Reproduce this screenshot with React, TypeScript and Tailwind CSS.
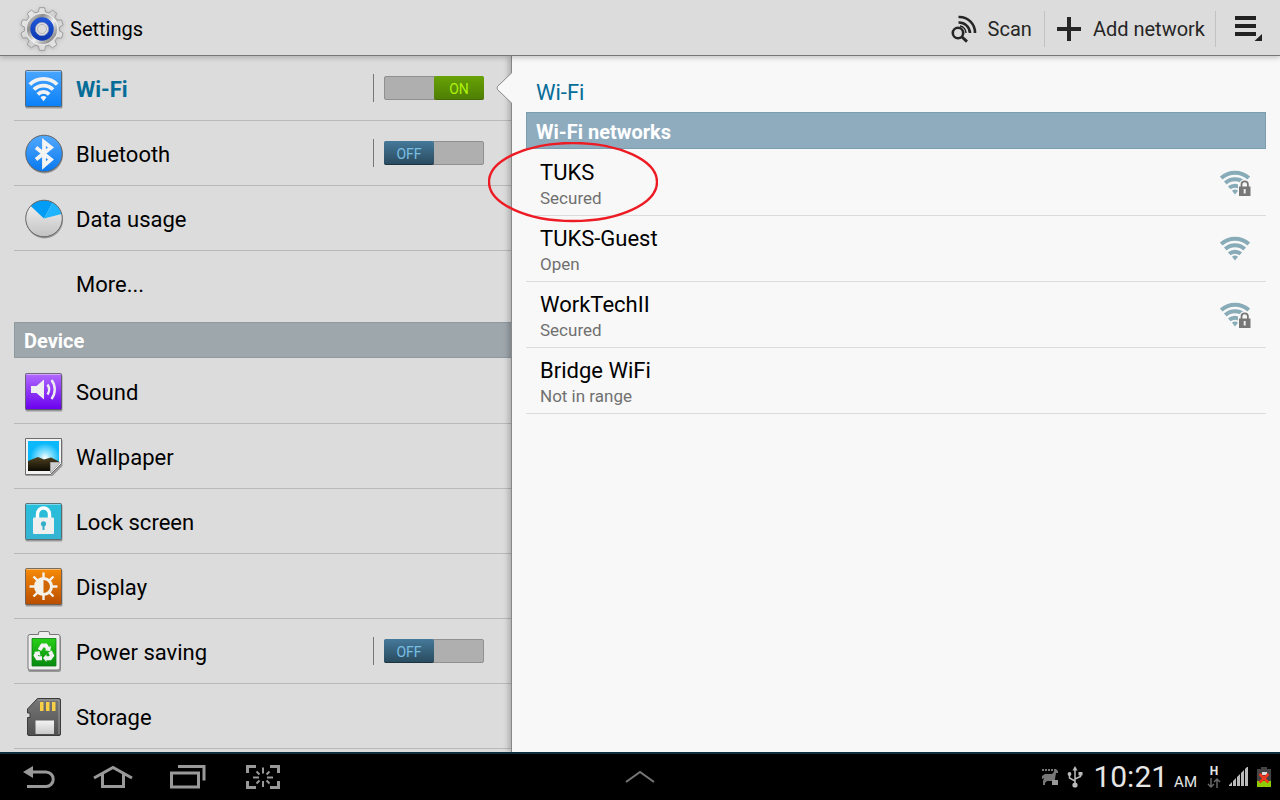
import { useState } from "react";
import type { ReactNode } from "react";

const gearPath = (() => {
  const points: string[] = [];
  for (let i = 0; i < 10; i++) {
    const steps = [
      [-12, 17.5],
      [-7, 21.5],
      [7, 21.5],
      [12, 17.5],
    ];
    for (const [offset, radius] of steps) {
      const angle = ((i * 36 + offset - 90) * Math.PI) / 180;
      points.push(
        `${(22 + radius * Math.cos(angle)).toFixed(2)},${(22 + radius * Math.sin(angle)).toFixed(2)}`
      );
    }
  }
  return `M${points.join("L")}Z`;
})();

function GearIcon() {
  return (
    <svg viewBox="0 0 44 44" className="size-11 drop-shadow-sm">
      <defs>
        <linearGradient id="gear" x1="0" y1="0" x2="1" y2="1">
          <stop offset="0" stopColor="#f4f4f4" />
          <stop offset="0.5" stopColor="#cfcfcf" />
          <stop offset="1" stopColor="#eee" />
        </linearGradient>
        <linearGradient id="gear-disc" x1="0" y1="0" x2="1" y2="1">
          <stop offset="0" stopColor="#e8e8e8" />
          <stop offset="0.3" stopColor="#8d8d8d" />
          <stop offset="0.55" stopColor="#f0f0f0" />
          <stop offset="0.8" stopColor="#959595" />
          <stop offset="1" stopColor="#dedede" />
        </linearGradient>
        <linearGradient id="gear-ring" x1="0" y1="0" x2="0" y2="1">
          <stop offset="0" stopColor="#1f55d6" />
          <stop offset="1" stopColor="#0d3ab4" />
        </linearGradient>
      </defs>
      <path d={gearPath} fill="url(#gear)" stroke="#8f8f8f" strokeWidth="0.8" strokeLinejoin="round" />
      <circle cx="22" cy="22" r="15.8" fill="url(#gear-disc)" stroke="#fafafa" strokeWidth="0.8" />
      <circle cx="22" cy="22" r="9.2" fill="#dcdcdc" stroke="url(#gear-ring)" strokeWidth="5" />
      <circle cx="22" cy="22" r="6.6" fill="#e4e4e6" stroke="#7f8cb5" strokeWidth="0.8" />
      <circle cx="22" cy="22" r="4.6" fill="#dcdcdc" stroke="#aaa" strokeWidth="0.8" />
    </svg>
  );
}

function ScanIcon() {
  return (
    <svg viewBox="0 0 28 28" className="size-7" fill="none" stroke="#262626">
      <circle cx="8" cy="18" r="5.2" strokeWidth="2.6" />
      <path d="M12 22l5 4.6" strokeWidth="3" />
      <path d="M8.5 7.5a11 11 0 0 1 11.5 10.5M8.5 2a15.5 15.5 0 0 1 16.5 16" strokeWidth="2.6" />
      <path d="M10 11a7 7 0 0 1 6 7" strokeWidth="1.5" />
    </svg>
  );
}

function Tile({ id, from, to, children }: { id: string; from: string; to: string; children: ReactNode }) {
  return (
    <svg viewBox="0 0 40 40" className="size-10 shrink-0">
      <defs>
        <linearGradient id={id} x1="0" y1="0" x2="0" y2="1">
          <stop offset="0" stopColor={from} />
          <stop offset="1" stopColor={to} />
        </linearGradient>
      </defs>
      <rect x="1.5" y="2.5" width="37" height="37" rx="1.5" fill="#000" opacity="0.3" />
      <rect x="1.5" y="1.5" width="36" height="36" rx="1" fill={`url(#${id})`} stroke="#555" strokeOpacity="0.75" />
      <path d="M2.5 2.5h34" stroke="#fff" strokeOpacity="0.4" />
      {children}
    </svg>
  );
}

function WifiTile() {
  return (
    <Tile id="wifi-tile" from="#4aa6ff" to="#0a80f8">
      <g fill="none" stroke="#f2f2f2" strokeWidth="3.8">
        <path d="M5.8 15.5a19.5 19.5 0 0 1 27.4 0" />
        <path d="M9.9 20.5a13.6 13.6 0 0 1 19.2 0" />
        <path d="M13.8 25.3a8 8 0 0 1 11.4 0" />
      </g>
      <path d="M16.5 28.3a4.2 4.2 0 0 1 6 0l-3 4z" fill="#f2f2f2" />
    </Tile>
  );
}

function BluetoothIcon() {
  return (
    <svg viewBox="0 0 40 40" className="size-10 shrink-0">
      <defs>
        <linearGradient id="bt" x1="0" y1="0" x2="0" y2="1">
          <stop offset="0" stopColor="#52a9ff" />
          <stop offset="1" stopColor="#0878ee" />
        </linearGradient>
      </defs>
      <circle cx="20.5" cy="21" r="18.5" fill="#000" opacity="0.3" />
      <circle cx="20" cy="19.5" r="18.3" fill="url(#bt)" stroke="#666" />
      <path d="M12 13.5l15 12-7 6V8l7 5.5-15 12" fill="none" stroke="#f4f4f4" strokeWidth="3.8" />
    </svg>
  );
}

function DataUsageIcon() {
  return (
    <svg viewBox="0 0 40 40" className="size-10 shrink-0">
      <defs>
        <linearGradient id="data" x1="0" y1="0" x2="0" y2="1">
          <stop offset="0" stopColor="#f4f4f4" />
          <stop offset="1" stopColor="#c2c2c2" />
        </linearGradient>
      </defs>
      <circle cx="20.5" cy="21" r="18.5" fill="#000" opacity="0.3" />
      <circle cx="20" cy="19.5" r="18.3" fill="url(#data)" />
      <path d="M20 19.5L6.7 7a18.3 18.3 0 0 1 22-3.6z" fill="#009cf5" />
      <path d="M20 19.5l8.7-16.1a18.3 18.3 0 0 1 9 11.5z" fill="#1fb4ff" />
      <circle cx="20" cy="19.5" r="18.3" fill="none" stroke="#666" />
    </svg>
  );
}

function SoundTile() {
  return (
    <Tile id="sound-tile" from="#b26bff" to="#6a00ee">
      <path d="M7 14h5.5l7.5-6.5v20l-7.5-6.5H7z" fill="#eee" />
      <g fill="none" stroke="#eee" strokeWidth="2.4">
        <path d="M23.5 12.5a9 9 0 0 1 0 10" />
        <path d="M27.5 8a15.5 15.5 0 0 1 0 19" />
      </g>
    </Tile>
  );
}

function WallpaperIcon() {
  return (
    <svg viewBox="0 0 40 40" className="size-10 shrink-0">
      <defs>
        <radialGradient id="sun" cx="0.55" cy="0.55" r="0.6">
          <stop offset="0" stopColor="#fff" />
          <stop offset="0.25" stopColor="#9fe8ff" />
          <stop offset="0.8" stopColor="#0ab8fb" />
        </radialGradient>
        <linearGradient id="hill" x1="0" y1="0" x2="0" y2="1">
          <stop offset="0" stopColor="#4f4220" />
          <stop offset="1" stopColor="#0c0a03" />
        </linearGradient>
      </defs>
      <path d="M1.5 3h37v26l-10 10h-27z" fill="#000" opacity="0.3" />
      <path d="M1.5 1.5h36v25l-11 11h-25z" fill="#f2f2f2" stroke="#6d6d6d" strokeLinejoin="round" />
      <path d="M4 4h31v20.5h-8.5V34H4z" fill="url(#sun)" />
      <path d="M4 24l10-4 6 2.5 7-2 8 4v0.5h-8.5V34H4z" fill="url(#hill)" />
      <path d="M26.5 36V25.5H36z" fill="#cfcfcf" stroke="#9c9c9c" strokeWidth="0.8" />
    </svg>
  );
}

function LockTile() {
  return (
    <Tile id="lock-tile" from="#27bfdc" to="#36b3d2">
      <path d="M13.5 17v-5a6 6 0 0 1 12 0v5" fill="none" stroke="#fff" strokeWidth="3.4" />
      <rect x="9" y="15.5" width="21" height="16.5" rx="1" fill="#efefef" />
      <circle cx="19.5" cy="21.8" r="2.6" fill="#35aeca" />
      <path d="M18.5 22h2v6h-2z" fill="#35aeca" />
    </Tile>
  );
}

function DisplayTile() {
  return (
    <Tile id="display-tile" from="#f78b06" to="#b94d00">
      <path
        d="M19.5 5.5v6M19.5 27v6M5.5 19.5h6M27 19.5h6.5M9.5 9.5l4.7 4.7M24.8 24.8l4.7 4.7M29.5 9.5l-4.7 4.7M14.2 24.8L9.5 29.5"
        stroke="#f4f0ea"
        strokeWidth="2.4"
      />
      <circle cx="19.5" cy="19.5" r="8" fill="#d06504" stroke="#f4f0ea" strokeWidth="3" />
      <path d="M19.5 12a7.5 7.5 0 0 0 0 15z" fill="#f4f0ea" />
    </Tile>
  );
}

function PowerIcon() {
  return (
    <svg viewBox="0 0 40 42" className="h-[42px] w-10 shrink-0">
      <defs>
        <linearGradient id="power" x1="0" y1="0" x2="0" y2="1">
          <stop offset="0" stopColor="#27cf18" />
          <stop offset="1" stopColor="#088a10" />
        </linearGradient>
      </defs>
      <rect x="4" y="5" width="33" height="36" rx="2" fill="#000" opacity="0.3" />
      <path
        d="M14.5 3.5V2a1.5 1.5 0 0 1 1.5-1.5h8A1.5 1.5 0 0 1 25.5 2v1.5H34a2 2 0 0 1 2 2V37a2 2 0 0 1-2 2H6a2 2 0 0 1-2-2V5.500a2 2 0 0 1 2-2z"
        fill="#efefef"
        stroke="#777"
      />
      <path d="M8 7.5h24V35H8z" fill="url(#power)" stroke="#0b7d10" strokeWidth="0.8" />
      <g fill="none" stroke="#f4f4f4" strokeWidth="4">
        <path d="M15.5 19l2.8-4.5h3.5l2 3" />
        <path d="M26 20.5l2 4-2 2.8h-4.5" />
        <path d="M18 27.3h-4.5l-1.8-2.8 1.8-3.3" />
      </g>
      <g fill="#f4f4f4">
        <path d="M20.8 19.3l5.5 1 .7-5.5z" />
        <path d="M22.5 23.3v7.6l-3.5-3.8z" />
        <path d="M10 21.5l5.5-1.6 1 5z" />
      </g>
    </svg>
  );
}

function StorageIcon() {
  return (
    <svg viewBox="0 0 40 40" className="size-10 shrink-0">
      <defs>
        <linearGradient id="card" x1="0" y1="0" x2="0" y2="1">
          <stop offset="0" stopColor="#777" />
          <stop offset="1" stopColor="#505050" />
        </linearGradient>
        <linearGradient id="label" x1="0" y1="0" x2="0" y2="1">
          <stop offset="0" stopColor="#f4f4f4" />
          <stop offset="1" stopColor="#cacaca" />
        </linearGradient>
      </defs>
      <path
        d="M13.5 1.5H35a1.500 1.500 0 0 1 1.5 1.5v34a1.500 1.500 0 0 1-1.5 1.5H5A1.500 1.500 0 0 1 3.5 37V20.500H6v-4.500H3.500v-4z"
        fill="url(#card)"
        stroke="#3c3c3c"
      />
      <path d="M14 3h21v34" fill="none" stroke="#aaa" strokeWidth="0.8" />
      <path d="M16 5h3.500v9H16zM22 5h3.500v9H22zM28 5h3.500v9H28z" fill="#f8cf45" />
      <path d="M11.500 23.500h18.500V37H11.500z" fill="url(#label)" />
    </svg>
  );
}

function SignalIcon({ locked }: { locked: boolean }) {
  return (
    <svg viewBox="0 0 32 28" className="h-7 w-8">
      <g fill="none" stroke="#88abb8" strokeWidth="4">
        <path d="M1.200 9a20.500 20.500 0 0 1 27.600 0" />
        <path d="M5.300 14a14.500 14.500 0 0 1 19.400 0" />
        <path d="M9.200 18.800a9 9 0 0 1 11.600 0" />
      </g>
      <path d="M12 21.800a4.600 4.600 0 0 1 6 0L15 25.500z" fill="#88abb8" />
      {locked && (
        <>
          <path d="M18 15h13v13H18z" fill="#f8f8f8" />
          <path d="M21.500 18v-2.500a3.200 3.200 0 0 1 6.400 0V18" fill="none" stroke="#f8f8f8" strokeWidth="4.500" />
          <path d="M21.500 18v-2.500a3.200 3.200 0 0 1 6.400 0V18" fill="none" stroke="#777" strokeWidth="1.800" />
          <path d="M19 17.500h11.500V27H19z" fill="#777" />
          <path d="M23.700 20h2v4.500h-2z" fill="#eee" />
        </>
      )}
    </svg>
  );
}

function Toggle({ label, on, onChange }: { label: string; on: boolean; onChange: () => void }) {
  return (
    <div className="flex h-7 items-center border-l border-[#777] pl-2.5">
      <label className="flex h-6 w-[100px] cursor-pointer rounded-xs border border-[#909090] bg-[#afafaf]">
        <input type="checkbox" className="sr-only" aria-label={label} checked={on} onChange={onChange} />
        {on ? (
          <span className="-my-px -mr-px ml-auto flex w-[50px] items-center justify-center rounded-xs border-b border-[#466b04] bg-linear-to-b from-[#68a206] to-[#4f7f04] pt-0.5 text-sm text-[#aef20c]">
            ON
          </span>
        ) : (
          <span className="-my-px -ml-px flex w-[50px] items-center justify-center rounded-xs border-b border-[#1c3442] bg-linear-to-b from-[#45799a] to-[#2a4c60] pt-0.5 text-sm text-[#79bfe4]">
            OFF
          </span>
        )}
      </label>
    </div>
  );
}

interface RowProps {
  icon?: ReactNode;
  label: string;
  active?: boolean;
  children?: ReactNode;
}

function SettingRow({ icon, label, active, children }: RowProps) {
  return (
    <li className="flex h-[65px] shrink-0 items-center border-b border-[#b9b9b9] pr-7">
      <button
        className={`flex h-full flex-1 items-center gap-3 pt-0.5 pl-2.5 text-left text-[22px] ${active ? "font-bold text-[#066d98]" : "text-black"}`}
      >
        <span className="flex w-10 justify-center">{icon}</span>
        {label}
      </button>
      {children}
    </li>
  );
}

const networks = [
  { name: "TUKS", status: "Secured", signal: true, marked: true },
  { name: "TUKS-Guest", status: "Open", signal: true },
  { name: "WorkTechII", status: "Secured", signal: true },
  { name: "Bridge WiFi", status: "Not in range", signal: false },
];

function TopBar() {
  return (
    <header className="relative z-20 flex h-14 shrink-0 items-center border-b border-[#777] bg-[#dcdcdc] pt-0.5 pl-5 text-xl text-black shadow-[0_2px_5px_rgba(0,0,0,0.2)]">
      <GearIcon />
      <h1 className="ml-1.5">Settings</h1>
      <div className="ml-auto flex h-9 items-center text-[#262626]">
        <button className="flex h-full items-center gap-2.5 border-r border-[#c2c2c2] pr-3">
          <ScanIcon />
          Scan
        </button>
        <button className="flex h-full items-center gap-3 border-r border-[#c2c2c2] pr-2.5 pl-3">
          <svg viewBox="0 0 24 24" className="size-6">
            <path d="M10 0h4v10h10v4H14v10h-4V14H0v-4h10z" fill="#262626" />
          </svg>
          Add network
        </button>
        <button aria-label="Menu" className="px-4.5">
          <svg viewBox="0 0 28 28" className="size-7">
            <path d="M1 1h21v4H1zM1 9h21v4H1zM1 17h21v4H1zM28 19v7h-7.500z" fill="#222" />
          </svg>
        </button>
      </div>
    </header>
  );
}

function Sidebar() {
  const [wifi, setWifi] = useState(true);
  const [bluetooth, setBluetooth] = useState(false);
  const [power, setPower] = useState(false);

  return (
    <nav className="w-2/5 shrink-0 overflow-hidden bg-[#dcdcdc] pl-3.5">
      <ul>
        <SettingRow icon={<WifiTile />} label="Wi-Fi" active>
          <Toggle label="Wi-Fi" on={wifi} onChange={() => setWifi(!wifi)} />
        </SettingRow>
        <SettingRow icon={<BluetoothIcon />} label="Bluetooth">
          <Toggle label="Bluetooth" on={bluetooth} onChange={() => setBluetooth(!bluetooth)} />
        </SettingRow>
        <SettingRow icon={<DataUsageIcon />} label="Data usage" />
        <li className="mb-1.5 flex h-[65px]">
          <button className="flex-1 pt-0.5 pl-[62px] text-left text-[22px]">More...</button>
        </li>
      </ul>
      <h2 className="flex h-9 items-center border border-[#8f9aa1] bg-[#9ea7ac] pt-0.5 pl-[9px] text-xl font-bold text-white">
        Device
      </h2>
      <ul className="pt-px">
        <SettingRow icon={<SoundTile />} label="Sound" />
        <SettingRow icon={<WallpaperIcon />} label="Wallpaper" />
        <SettingRow icon={<LockTile />} label="Lock screen" />
        <SettingRow icon={<DisplayTile />} label="Display" />
        <SettingRow icon={<PowerIcon />} label="Power saving">
          <Toggle label="Power saving" on={power} onChange={() => setPower(!power)} />
        </SettingRow>
        <SettingRow icon={<StorageIcon />} label="Storage" />
      </ul>
    </nav>
  );
}

function WifiPanel() {
  return (
    <main className="relative z-10 -ml-px flex-1 border-l border-[#888] bg-[#f8f8f8] px-3.5 shadow-[-2px_0_6px_rgba(0,0,0,0.25)]">
      {/* pointer towards the selected row */}
      <svg viewBox="0 0 17 32" className="absolute top-4 -left-4 h-8 w-[17px]">
        <path d="M17 0.500H16L1.500 14.500Q0.500 16 1.500 17.500L16 31.500H17z" fill="#f8f8f8" />
        <path d="M16 0.500L1.500 14.500Q0.500 16 1.500 17.500L16 31.500" fill="none" stroke="#888" />
      </svg>
      <h2 className="flex h-14 items-end pb-[3px] pl-2.5 text-[22px] text-[#066d98]">Wi-Fi</h2>
      <h3 className="flex h-[37px] items-center border border-[#7c9fb0] bg-[#8facbf] pt-0.5 pl-[9px] text-xl font-bold text-white">
        Wi-Fi networks
      </h3>
      <ul className="pt-px">
        {networks.map((network) => (
          <li key={network.name} className="relative border-b border-[#dcdcdc]">
            <button className="flex h-[65px] w-full items-center justify-between px-3.5 text-left">
              <span className="pt-1">
                <span className="block text-[22px] leading-[26px] text-black">{network.name}</span>
                <span className="block text-[17px] leading-6 text-[#707070]">{network.status}</span>
              </span>
              {network.signal && <SignalIcon locked={network.status === "Secured"} />}
            </button>
            {network.marked && (
              <svg
                viewBox="0 0 170 82"
                className="pointer-events-none absolute -top-2 -left-[38px] h-[82px] w-[170px]"
              >
                <ellipse cx="85" cy="40" rx="84" ry="39" fill="none" stroke="#ed1c24" strokeWidth="2.400" />
              </svg>
            )}
          </li>
        ))}
      </ul>
    </main>
  );
}

function SystemBar() {
  return (
    <footer className="relative z-20 grid h-12 shrink-0 grid-cols-[1fr_auto_1fr] items-center border-t-2 border-[#0c2f3f] bg-black text-[#e6e6e6]">
      <div className="flex items-center pl-[23px]">
        <button aria-label="Back">
          <svg viewBox="0 0 32 24" className="h-6 w-8">
            <path d="M0 7l10-6v12z" fill="#999" />
            <path d="M9 7h14a7.200 7.200 0 0 1 0 14.500H4" fill="none" stroke="#999" strokeWidth="3" />
          </svg>
        </button>
        <button aria-label="Home" className="ml-9.5">
          <svg viewBox="0 0 40 24" className="h-6 w-10" fill="none" stroke="#999" strokeWidth="3">
            <path d="M1 13L20 2.500 39 13M9.500 9v12.500h21V9" />
          </svg>
        </button>
        <button aria-label="Recent apps" className="ml-9">
          <svg viewBox="0 0 38 24" className="h-6 w-[38px]" fill="none" stroke="#999" strokeWidth="3">
            <path d="M2.500 8h27v14h-27zM9 1.500h26v14" />
          </svg>
        </button>
        <button aria-label="Screenshot" className="ml-9.5">
          <svg viewBox="0 0 36 26" className="h-[26px] w-9" fill="none" stroke="#999" strokeWidth="3">
            <path d="M2.500 9V2.500h8.500M25 2.500h8.500V9M2.500 17v6.500h8.500M25 23.500h8.500V17" />
            <path
              d="M18 3.500v6M18 17v6M8 13.500h6M22 13.500h6M11.500 7.500l3 3M24.500 7.500l-3 3M11.500 19.500l3-3M24.500 19.500l-3-3"
              strokeWidth="2"
            />
          </svg>
        </button>
      </div>
      <button aria-label="Show tray">
        <svg viewBox="0 0 30 14" className="h-3.5 w-[30px]">
          <path d="M1 12l14-10 14 10" fill="none" stroke="#777" strokeWidth="2" />
        </svg>
      </button>
      <div className="flex items-center justify-end pr-[9px]">
        <svg viewBox="0 0 18 18" className="mr-2 size-[18px]" fill="#777">
          <path d="M1 1h2v2H1zM4 1h2v2H4zM7 1h2v2H7zM10 1h2v2h-2z" />
          <path d="M13 1h2l2 2v2h-2l-1 6v6h-2v-4H6l-2 2v2H2v-4l1-3-2 1V8l3-2h7l2-2z" />
          <path d="M11 12h6v5h-6z" fill="#999" />
        </svg>
        <svg viewBox="0 0 16 22" className="mr-2.5 h-[22px] w-4" fill="none" stroke="#bbb" strokeWidth="1.500">
          <path d="M8 3v16M8 15L2.500 12V8M8 13l5.500-2.500V8" />
          <path d="M8 0l2.500 4.500h-5z" fill="#bbb" stroke="none" />
          <circle cx="8" cy="19" r="2.600" fill="#bbb" stroke="none" />
          <circle cx="2.500" cy="8" r="1.900" fill="#bbb" stroke="none" />
          <path d="M11.500 6h4v3.500h-4z" fill="#bbb" stroke="none" />
        </svg>
        <time className="flex items-baseline gap-1.5">
          <span className="text-3xl">10:21</span>
          <span className="text-[15px]">AM</span>
        </time>
        <div className="ml-2.5 flex w-3.5 flex-col items-center">
          <span className="text-xs leading-3 font-bold">H</span>
          <svg viewBox="0 0 14 12" className="h-3 w-3.5" fill="none" stroke="#666" strokeWidth="1.500">
            <path d="M4 1v9M1 7l3 3 3-3M10 11V2M7 5l3-3 3 3" />
          </svg>
        </div>
        <svg viewBox="0 0 20 20" className="ml-2 size-5" fill="#bbb">
          <path d="M0 19v-1l3-3v4zM4 19v-5l3-3v8zM8 19v-9l3-3v12zM12 19V6l3-3v16zM16 19V2l3-3v20z" />
        </svg>
        <svg viewBox="0 0 14 21" className="ml-2 h-[21px] w-3.5">
          <path d="M4 0h6v2h4v12H0V2h4z" fill="#444" />
          <path d="M0 14h14v6H0z" fill="#8ccc00" />
          <path d="M5 5h5v3H5z" fill="#ddd" />
          <path d="M2.500 7l9 8.500M11.500 7l-9 8.500" stroke="#f2381c" strokeWidth="2.600" />
        </svg>
      </div>
    </footer>
  );
}

export default function App() {
  return (
    <div className="flex h-screen flex-col overflow-hidden bg-[#f8f8f8] font-['Roboto',sans-serif]">
      <TopBar />
      <div className="flex min-h-0 flex-1">
        <Sidebar />
        <WifiPanel />
      </div>
      <SystemBar />
    </div>
  );
}
